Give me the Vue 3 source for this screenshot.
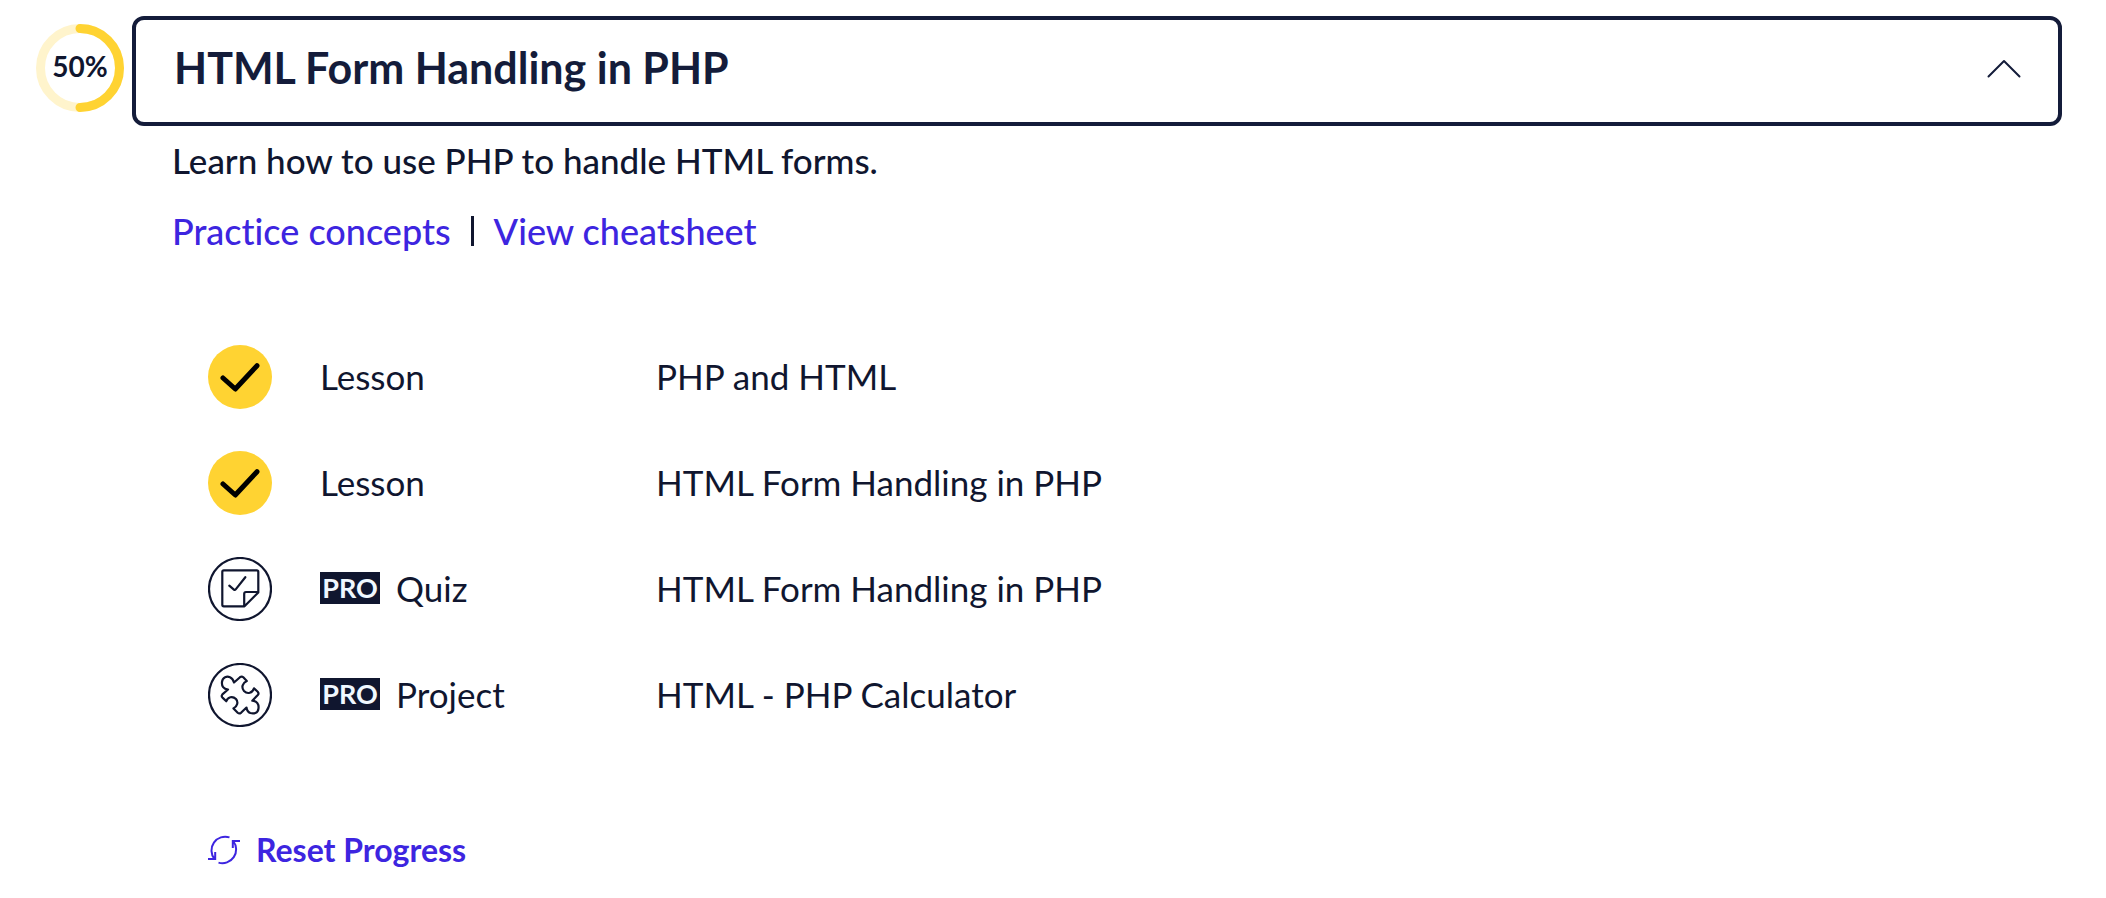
<script setup>
import { ref } from 'vue'

const open = ref(true)
const percent = 50
const items = [
  { kind: 'Lesson', title: 'PHP and HTML', icon: 'done', pro: false },
  { kind: 'Lesson', title: 'HTML Form Handling in PHP', icon: 'done', pro: false },
  { kind: 'Quiz', title: 'HTML Form Handling in PHP', icon: 'quiz', pro: true },
  { kind: 'Project', title: 'HTML - PHP Calculator', icon: 'project', pro: true },
]
</script>

<template>
  <main class="module">
    <div class="progress" role="img" :aria-label="percent + '% complete'">
      <svg viewBox="0 0 88 88" fill="none" stroke-width="9" aria-hidden="true">
        <circle cx="44" cy="44" r="39.5" stroke="#fff4cc" />
        <path d="M44 4.5a39.5 39.5 0 0 1 0 79" stroke="#ffd332" stroke-linecap="round" />
      </svg>
      <span class="percent">{{ percent }}%</span>
    </div>

    <section class="content">
      <h2 class="heading">
        <button class="toggle" type="button" :aria-expanded="open" @click="open = !open">
          <span>HTML Form Handling in PHP</span>
          <svg class="chevron" :class="{ closed: !open }" viewBox="0 0 34 34" aria-hidden="true">
            <path d="M1.500 25.500 17 10l15.500 15.500" />
          </svg>
        </button>
      </h2>

      <div v-if="open" class="body">
        <p class="description">Learn how to use PHP to handle HTML forms.</p>
        <nav class="links">
          <a href="#practice">Practice concepts</a>
          <span class="divider"></span>
          <a href="#cheatsheet">View cheatsheet</a>
        </nav>

        <ul class="items">
          <li v-for="(item, i) in items" :key="i">
            <a class="item" href="#item">
              <svg class="status" viewBox="0 0 64 64" aria-hidden="true">
                <template v-if="item.icon === 'done'">
                  <circle cx="32" cy="32" r="32" fill="#ffd332" />
                  <path class="tick" d="M15 33 27.300 44 49 20.700" />
                </template>
                <template v-else>
                  <circle class="line" cx="32" cy="32" r="31" />
                  <path
                    v-if="item.icon === 'quiz'"
                    class="line"
                    d="M50.300 35.200V14.800q0-1.500-1.500-1.500h-33q-1.500 0-1.500 1.500v33q0 1.500 1.500 1.500h20.700L50.300 35.500V35H38q-1.800 0-1.800 1.800v12.500M21.300 28.600l4.600 4q1 .8 1.800-.2L37.300 20.200"
                  />
                  <path
                    v-else
                    class="line"
                    d="M26 19.500 32 14.200q1.700-1.400 3.300.1L38.800 18C34.500 20 33 24.500 36 28c3.500 3.600 8.500 2 10-2.700l3.700 3.500q1.500 1.600.1 3.200L44.300 37.700C49 38 51 41.500 50.500 45.300C50 50.500 45.500 50.800 42.300 50C39.500 49 38.800 46.800 38.500 44.500L33 49.800q-1.700 1.400-3.300-.1L25.500 45.400C29.500 43 30.500 39 28 36C24.500 32.500 19.500 34 18.300 38.300L14.500 34.600q-1.500-1.600-.1-3.200L20 26.500C15.500 26 13.500 23 14 19C14.500 14 19 13 22 14.200Q25 15.500 26 19.500Z"
                  />
                </template>
              </svg>
              <span class="kind">
                <span v-if="item.pro" class="pro">PRO</span>
                <span>{{ item.kind }}</span>
              </span>
              <span class="title">{{ item.title }}</span>
            </a>
          </li>
        </ul>

        <button class="reset" type="button">
          <svg viewBox="0 0 32 32" aria-hidden="true">
            <path d="M21.500 3.400A13.700 13.700 0 0 0 6.500 25M0 25h7.200v-7M10.500 28.600A13.700 13.700 0 0 0 25.200 7M32 7h-7.200v7" />
          </svg>
          Reset Progress
        </button>
      </div>
    </section>
  </main>
</template>

<style>
body {
  margin: 0;
  background: #fff;
}
</style>

<style scoped>
.module {
  display: flex;
  gap: 8px;
  padding: 16px 44px 16px 36px;
  color: #10162f;
  font-family: Lato, "Liberation Sans", sans-serif;
  font-size: 35px;
  line-height: 48px;
}

.progress {
  display: grid;
  flex: none;
  width: 88px;
  height: 88px;
  margin-top: 8px;
  place-items: center;
}

.progress > * {
  grid-area: 1 / 1;
}

.percent {
  padding-bottom: 4px;
  font-size: 28px;
  font-weight: 700;
  line-height: 32px;
}

.content {
  flex: 1;
  min-width: 0;
}

.heading {
  margin: 0;
}

.toggle {
  display: flex;
  align-items: center;
  justify-content: space-between;
  width: 100%;
  padding: 22px 37px 28px 38px;
  border: 4px solid #141c3a;
  border-radius: 12px;
  background: #fff;
  color: #141c3a;
  font: 700 43px/52px Lato, "Liberation Sans", sans-serif;
  text-align: left;
  cursor: pointer;
}

.chevron {
  width: 34px;
  height: 34px;
  fill: none;
  stroke: #141c3a;
  stroke-width: 2;
  stroke-linecap: round;
  stroke-linejoin: round;
}

.closed {
  rotate: 180deg;
}

.body {
  padding: 10px 0 0 40px;
}

.description {
  margin: 0 0 23px;
  font-weight: 500;
}

.links {
  display: flex;
  align-items: center;
  gap: 20px;
  font-size: 36px;
  font-variant-ligatures: no-common-ligatures;
}

.links a {
  color: #3d25e0;
  font-weight: 500;
  text-decoration: none;
}

.divider {
  width: 3px;
  height: 30px;
  background: #10162f;
}

.items {
  display: grid;
  gap: 42px;
  margin: 90px 0 0;
  padding: 0 0 0 36px;
  list-style: none;
}

.item {
  display: grid;
  grid-template-columns: 64px 288px 1fr;
  column-gap: 48px;
  align-items: center;
  color: inherit;
  text-decoration: none;
}

.status {
  width: 64px;
  height: 64px;
}

.tick {
  fill: none;
  stroke: #000;
  stroke-width: 5;
  stroke-linecap: round;
  stroke-linejoin: round;
}

.line {
  fill: none;
  stroke: #10162f;
  stroke-width: 2.2;
  stroke-linecap: round;
  stroke-linejoin: round;
}

.kind,
.title {
  padding-bottom: 3px;
}

.kind {
  display: flex;
  align-items: center;
  gap: 16px;
}

.pro {
  width: 60px;
  background: #10162f;
  color: #f0f8ff;
  font-size: 27px;
  font-weight: 700;
  line-height: 32px;
  text-align: center;
}

.reset {
  display: flex;
  align-items: center;
  gap: 16px;
  margin: 103px 0 0 36px;
  padding: 0;
  border: 0;
  background: none;
  color: #3d25e0;
  font: 700 32px/40px Lato, "Liberation Sans", sans-serif;
  cursor: pointer;
}

.reset svg {
  width: 32px;
  height: 32px;
  fill: none;
  stroke: currentColor;
  stroke-width: 2;
}
</style>
